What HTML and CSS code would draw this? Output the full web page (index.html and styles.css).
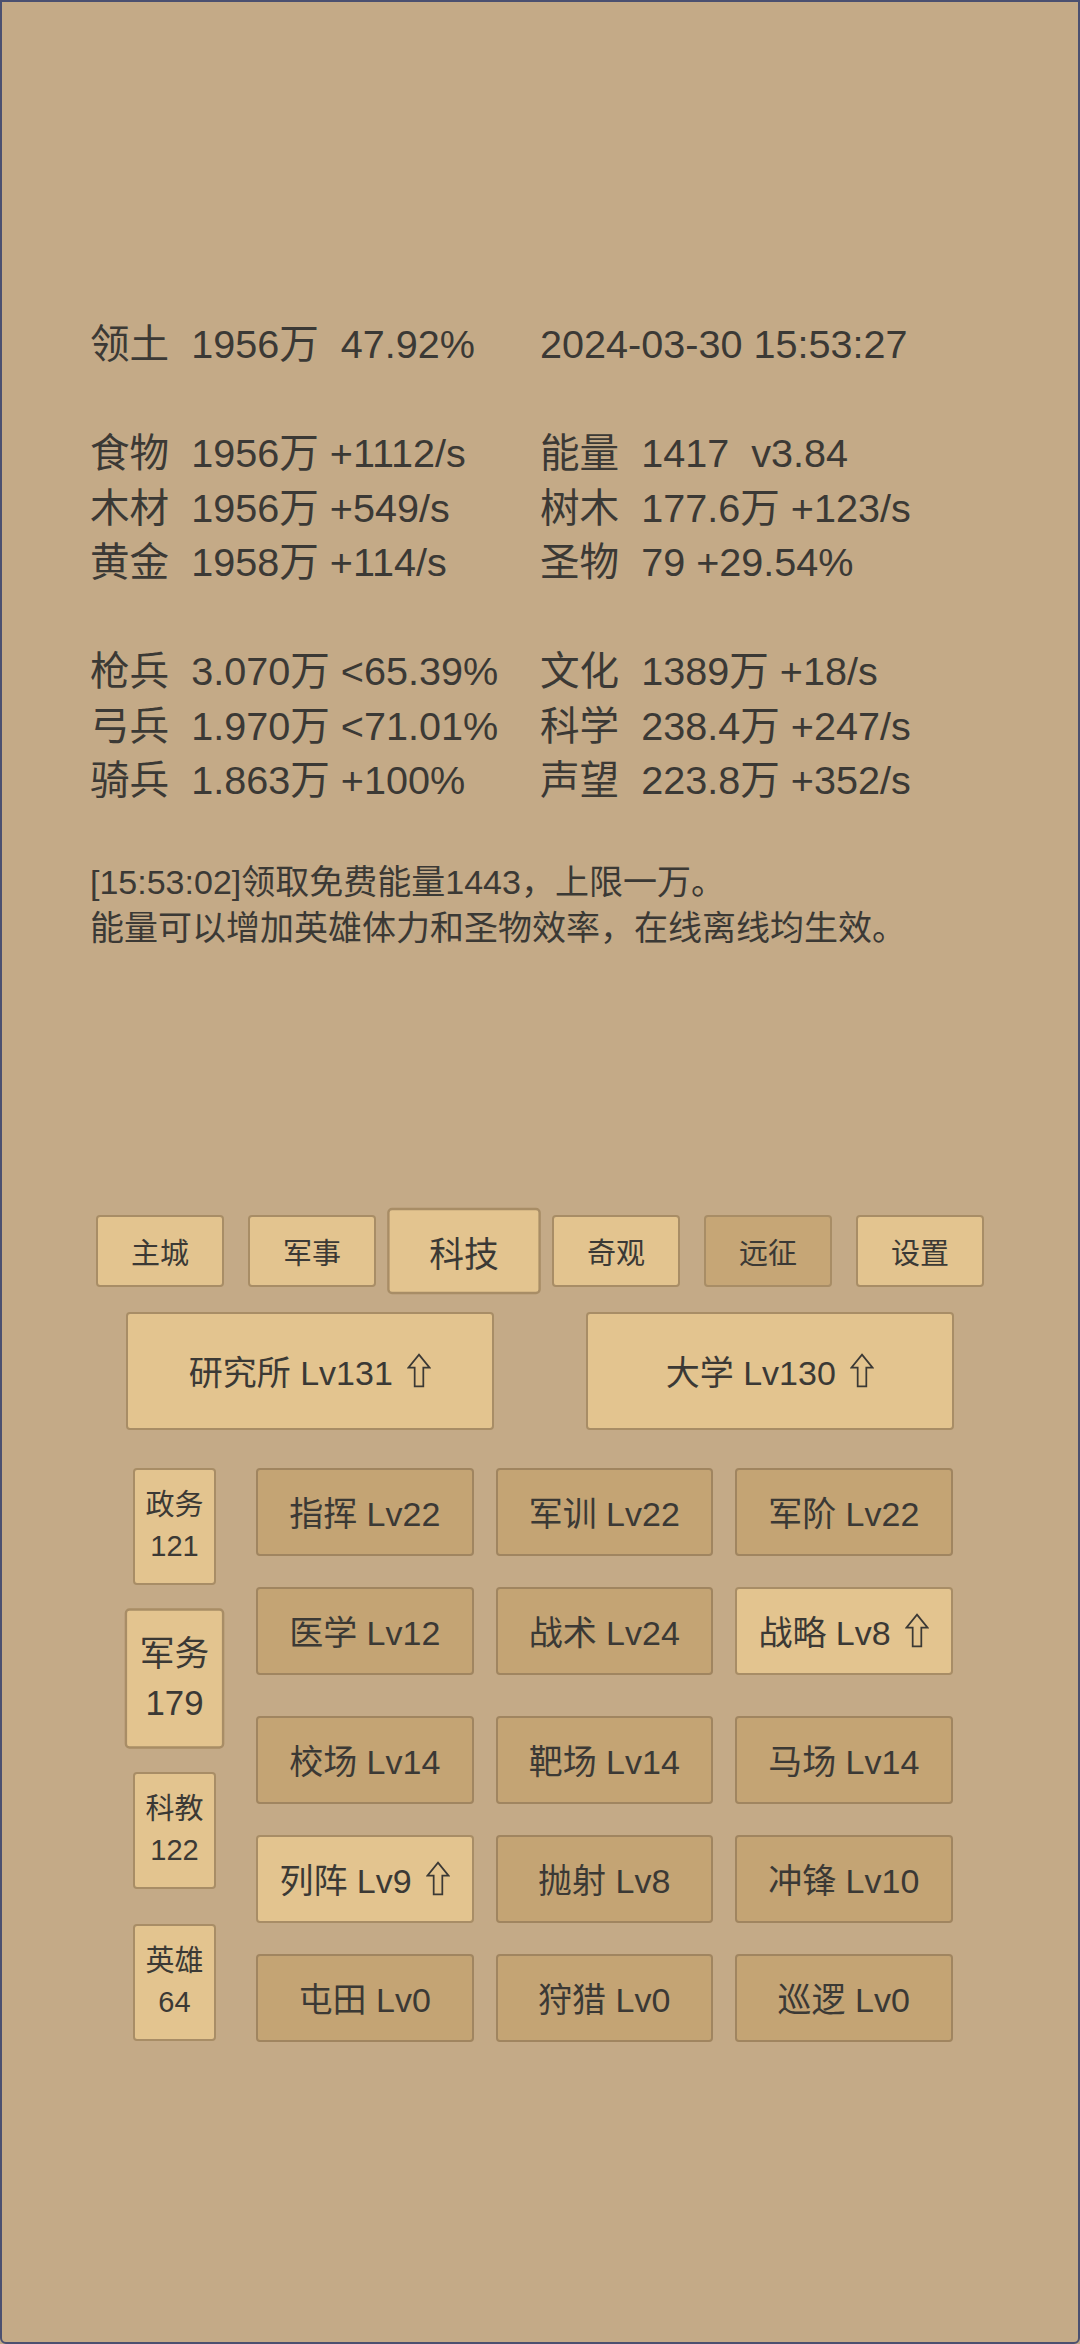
FILE: index.html
```html
<!DOCTYPE html>
<html lang="zh">
<head>
<meta charset="utf-8">
<title>科技</title>
<link rel="stylesheet" href="styles.css">
</head>
<body>
<div class="page">
  <div class="stats">
    <div class="group">
      <div class="cell">领土  1956万  47.92%</div>
      <div class="cell">2024-03-30 15:53:27</div>
    </div>
    <div class="group">
      <div class="cell">食物  1956万 +1112/s</div>
      <div class="cell">能量  1417  v3.84</div>
      <div class="cell">木材  1956万 +549/s</div>
      <div class="cell">树木  177.6万 +123/s</div>
      <div class="cell">黄金  1958万 +114/s</div>
      <div class="cell">圣物  79 +29.54%</div>
    </div>
    <div class="group">
      <div class="cell">枪兵  3.070万 &lt;65.39%</div>
      <div class="cell">文化  1389万 +18/s</div>
      <div class="cell">弓兵  1.970万 &lt;71.01%</div>
      <div class="cell">科学  238.4万 +247/s</div>
      <div class="cell">骑兵  1.863万 +100%</div>
      <div class="cell">声望  223.8万 +352/s</div>
    </div>
  </div>

  <div class="message">
    <div>[15:53:02]领取免费能量1443，上限一万。</div>
    <div>能量可以增加英雄体力和圣物效率，在线离线均生效。</div>
  </div>

  <div class="tabs">
    <div class="tab">主城</div>
    <div class="tab">军事</div>
    <div class="tab active">科技</div>
    <div class="tab">奇观</div>
    <div class="tab dim">远征</div>
    <div class="tab">设置</div>
  </div>

  <div class="buildings">
    <div class="building">研究所 Lv131 <svg class="up" viewBox="0 0 25 36" aria-hidden="true"><path d="M12.5 1.5 L23.5 15 L17 15 L17 34.5 L8 34.5 L8 15 L1.5 15 Z"/></svg></div>
    <div class="building">大学 Lv130 <svg class="up" viewBox="0 0 25 36" aria-hidden="true"><path d="M12.5 1.5 L23.5 15 L17 15 L17 34.5 L8 34.5 L8 15 L1.5 15 Z"/></svg></div>
  </div>

  <div class="tech">
    <div class="side">
      <div class="sbtn"><span>政务</span><span>121</span></div>
      <div class="sbtn active"><span>军务</span><span>179</span></div>
      <div class="sbtn"><span>科教</span><span>122</span></div>
      <div class="sbtn"><span>英雄</span><span>64</span></div>
    </div>
    <div class="grid">
      <div class="gbtn">指挥 Lv22</div>
      <div class="gbtn">军训 Lv22</div>
      <div class="gbtn">军阶 Lv22</div>
      <div class="gbtn">医学 Lv12</div>
      <div class="gbtn">战术 Lv24</div>
      <div class="gbtn lit">战略 Lv8 <svg class="up" viewBox="0 0 25 36" aria-hidden="true"><path d="M12.5 1.5 L23.5 15 L17 15 L17 34.5 L8 34.5 L8 15 L1.5 15 Z"/></svg></div>
      <div class="gbtn">校场 Lv14</div>
      <div class="gbtn">靶场 Lv14</div>
      <div class="gbtn">马场 Lv14</div>
      <div class="gbtn lit">列阵 Lv9 <svg class="up" viewBox="0 0 25 36" aria-hidden="true"><path d="M12.5 1.5 L23.5 15 L17 15 L17 34.5 L8 34.5 L8 15 L1.5 15 Z"/></svg></div>
      <div class="gbtn">抛射 Lv8</div>
      <div class="gbtn">冲锋 Lv10</div>
      <div class="gbtn">屯田 Lv0</div>
      <div class="gbtn">狩猎 Lv0</div>
      <div class="gbtn">巡逻 Lv0</div>
    </div>
  </div>
</div>
</body>
</html>
```

FILE: styles.css
```css
html, body {
  margin: 0;
  padding: 0;
  background: #c4aa87;
}

.page {
  box-sizing: border-box;
  width: 1080px;
  height: 2344px;
  border: 2px solid #4b5070;
  border-radius: 0 0 6px 6px;
  background: #c4aa87;
  color: #3b3935;
  font-family: "Liberation Sans", "Noto Sans CJK SC", sans-serif;
  padding-top: 315px;
  overflow: hidden;
}

.stats {
  padding-left: 88px;
  font-size: 39.6px;
  line-height: 54.5px;
}

.group {
  display: grid;
  grid-template-columns: 450px auto;
  margin-bottom: 54.5px;
}

.cell {
  white-space: pre;
}

.message {
  padding-left: 88px;
  margin-top: -3px;
  font-size: 34px;
  line-height: 46.4px;
}

.tabs {
  display: flex;
  justify-content: center;
  gap: 24px;
  margin-top: 263px;
}

.tab {
  box-sizing: border-box;
  width: 128px;
  height: 72px;
  display: flex;
  align-items: center;
  justify-content: center;
  background: #e3c48f;
  border: 2px solid #a88d66;
  border-radius: 4px;
  font-size: 29px;
}

.tab.active {
  transform: scale(1.2);
}

.tab.dim {
  background: #c6a676;
}

.buildings {
  display: flex;
  justify-content: center;
  gap: 92px;
  margin-top: 25px;
}

.building {
  box-sizing: border-box;
  width: 368px;
  height: 118px;
  display: flex;
  align-items: center;
  justify-content: center;
  background: #e3c48f;
  border: 2px solid #a88d66;
  border-radius: 4px;
  font-size: 34px;
  white-space: pre;
}

.up {
  width: 24px;
  height: 35px;
  margin-left: 5px;
  fill: none;
  stroke: #3b3935;
  stroke-width: 1.8;
  stroke-linejoin: miter;
}

.tech {
  display: flex;
  gap: 40px;
  padding-left: 131px;
  margin-top: 38px;
}

.side {
  display: flex;
  flex-direction: column;
  gap: 35px;
  width: 83px;
}

.sbtn {
  box-sizing: border-box;
  height: 117px;
  display: flex;
  flex-direction: column;
  align-items: center;
  justify-content: center;
  background: #e3c48f;
  border: 2px solid #a88d66;
  border-radius: 4px;
  font-size: 29px;
  line-height: 41px;
}

.sbtn.active {
  transform: scale(1.2);
}

.grid {
  display: grid;
  grid-template-columns: repeat(3, 217.5px);
  grid-template-rows: 88px 88px 98px 88px 88px;
  column-gap: 22px;
  row-gap: 31px;
}

.gbtn {
  box-sizing: border-box;
  height: 88px;
  display: flex;
  align-items: center;
  justify-content: center;
  background: #c4a474;
  border: 2px solid #a08560;
  border-radius: 4px;
  font-size: 34px;
  white-space: pre;
  align-self: end;
}

.gbtn.lit {
  background: #e3c48f;
  border-color: #a88d66;
}
```
